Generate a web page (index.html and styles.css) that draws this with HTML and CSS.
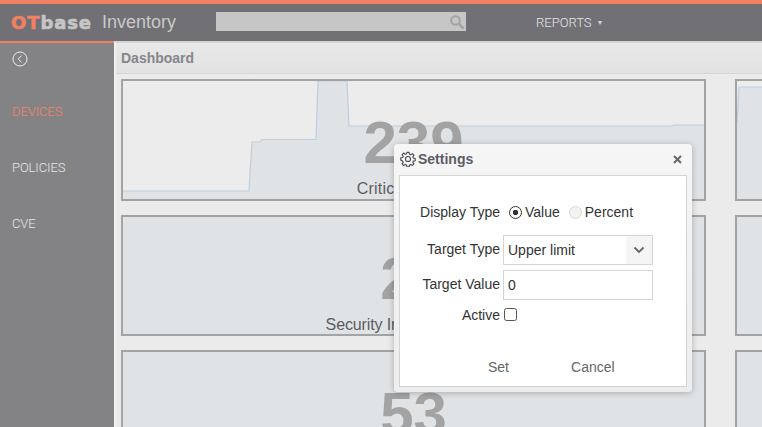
FILE: index.html
```html
<!DOCTYPE html>
<html lang="en">
<head>
<meta charset="utf-8">
<title>OTbase Inventory</title>
<link rel="stylesheet" href="styles.css">
</head>
<body>
<div class="app">
  <header class="topbar">
    <div class="logo"><span class="logo-ot">OT</span><span class="logo-base">base</span></div>
    <div class="product">Inventory</div>
    <div class="search">
      <svg class="search-icon" width="16" height="16" viewBox="0 0 16 16"><circle cx="6.5" cy="6.5" r="4.3" fill="none" stroke="#a3a3a3" stroke-width="2"/><path d="M10 10l4.5 4.5" stroke="#a3a3a3" stroke-width="2.6" fill="none"/></svg>
    </div>
    <div class="reports">REPORTS<span class="caret">▼</span></div>
  </header>
  <div class="body">
    <nav class="sidebar">
      <svg class="back" width="16" height="16" viewBox="0 0 16 16"><circle cx="8" cy="8" r="7" fill="none" stroke="#eee" stroke-width="1"/><path d="M9.6 4.6L6.2 8l3.4 3.4" fill="none" stroke="#eee" stroke-width="1"/></svg>
      <a class="nav nav-active">DEVICES</a>
      <a class="nav">POLICIES</a>
      <a class="nav">CVE</a>
    </nav>
    <main class="main">
      <div class="titlebar">Dashboard</div>
      <div class="grid">
        <section class="card card-chart">
          <svg class="chart" width="581" height="118" viewBox="0 0 581 118"><path class="area" d="M0 110H126L129 61H137L139 58.500H193L195 0H224L226 45H549L551 44H581V118H0Z"/><path class="line" d="M0 110H126L129 61H137L139 58.500H193L195 0H224L226 45H549L551 44H581"/></svg>
          <div class="value">239</div>
          <div class="label label-wide">Critical Devices</div>
        </section>
        <section class="card card-side card-chart">
          <svg class="chart" width="25" height="118" viewBox="0 0 25 118"><path class="area" d="M0 42L2 6H25V118H0Z"/><path class="line" d="M0 42L2 6H25"/></svg>
        </section>
        <section class="card">
          <div class="value">23</div>
          <div class="label label-tight">Security Incident Reports</div>
        </section>
        <section class="card card-side"></section>
        <section class="card">
          <div class="value">53</div>
        </section>
        <section class="card card-side"></section>
      </div>
    </main>
  </div>
</div>
<div class="dialog">
  <div class="dialog-head">
    <svg class="gear" width="16" height="16" viewBox="0 0 24 24"><path d="M10.300 2h3.400l.5 2.900 1.900.8 2.400-1.700 2.400 2.400-1.700 2.400.8 1.900 2.900.5v3.400l-2.900.5-.8 1.900 1.700 2.400-2.400 2.400-2.400-1.700-1.900.8-.5 2.900h-3.400l-.5-2.900-1.900-.8-2.400 1.700-2.400-2.400 1.700-2.400-.8-1.900L1.100 13.700v-3.400l2.900-.5.800-1.900-1.700-2.400 2.400-2.400 2.400 1.700 1.900-.8z" fill="none" stroke="#4d4d58" stroke-width="1.700" stroke-linejoin="round"/><circle cx="12" cy="12" r="3.800" fill="none" stroke="#4d4d58" stroke-width="1.700"/></svg>
    <span class="dialog-title">Settings</span>
    <svg class="close" width="9" height="9" viewBox="0 0 9 9"><path d="M1 1l7 7M8 1L1 8" fill="none" stroke="#666" stroke-width="2"/></svg>
  </div>
  <div class="dialog-body">
    <div class="row row-display">
      <span class="row-label">Display Type</span>
      <span class="radio radio-on"></span><span class="radio-text">Value</span>
      <span class="radio radio-off"></span><span class="radio-text">Percent</span>
    </div>
    <div class="row row-select">
      <span class="row-label row-label-raised">Target Type</span>
      <div class="select"><span class="select-text">Upper limit</span><span class="select-btn"><svg width="12" height="8" viewBox="0 0 12 8"><path d="M1.500 1.500L6 6l4.500-4.500" fill="none" stroke="#666" stroke-width="1.800"/></svg></span></div>
    </div>
    <div class="row row-input">
      <span class="row-label row-label-raised">Target Value</span>
      <div class="input">0</div>
    </div>
    <div class="row row-check">
      <span class="row-label">Active</span>
      <span class="check"></span>
    </div>
    <div class="actions">
      <span class="action action-set">Set</span>
      <span class="action">Cancel</span>
    </div>
  </div>
</div>
</body>
</html>
```
FILE: styles.css
```css
* { box-sizing: border-box; }
html, body { margin: 0; height: 100%; overflow: hidden; }
body { font-family: "Liberation Sans", Arial, sans-serif; background: #ebebeb; }
.app { width: 762px; height: 427px; display: flex; flex-direction: column; overflow: hidden; }

.topbar { height: 41px; flex: none; background: #717075; border-top: 4px solid #f08263; display: flex; align-items: center; padding-left: 11px; }
.logo { font-family: "DejaVu Sans", sans-serif; font-weight: 700; font-size: 18px; letter-spacing: .9px; width: 91px; -webkit-text-stroke: .6px currentColor; }
.logo-ot { color: #f08263; }
.logo-base { color: #c6c6c6; }
.product { font-size: 18px; color: #c9c9c9; width: 114px; }
.search { width: 250px; height: 19px; background: #c6c6c6; margin-top: -2px; display: flex; align-items: center; justify-content: flex-end; padding-right: 1px; }
.search-icon { display: block; }
.reports { margin-left: 70px; font-family: Roboto, sans-serif; font-weight: 300; font-size: 13px; color: #e6e6e6; display: flex; align-items: center; }
.caret { font-size: 7px; margin-left: 5px; color: #d2d2d2; }

.body { flex: 1; display: flex; min-height: 0; }
.sidebar { width: 114px; flex: none; background: #838385; border-top: 2px solid #f08263; display: flex; flex-direction: column; padding-left: 12px; }
.back { display: block; margin-top: 8px; margin-bottom: 37px; }
.nav { display: block; height: 56px; font-family: Roboto, sans-serif; font-weight: 300; font-size: 13px; letter-spacing: -.1px; line-height: 16px; color: #e6e6e6; }
.nav-active { color: #f5836a; }

.main { flex: 1; min-width: 0; border-left: 2px solid #f1f1f1; border-top: 2px solid #d4d4d4; display: flex; flex-direction: column; }
.titlebar { height: 31px; flex: none; background: linear-gradient(#e8e8e8, #e2e2e2); border-bottom: 1px solid #d6d6d6; padding: 7px 0 0 5px; font-size: 14px; font-weight: 700; line-height: 16px; color: #85858d; }
.grid { display: grid; grid-template-columns: 585px 60px; grid-template-rows: 122px 121px 122px; column-gap: 29px; row-gap: 14px; padding: 5px 0 0 5px; }

.card { position: relative; border: 2px solid #a3a3a3; background: #e0e3e6; overflow: hidden; text-align: center; }
.card-chart { background: #ececec; }
.chart { position: absolute; left: 0; top: 0; display: block; }
.area { fill: #e0e3e6; }
.line { fill: none; stroke: #bccfe0; stroke-width: 1.200; }
.value { position: relative; margin-top: 32px; font-size: 60px; font-weight: 700; line-height: 60px; color: #a3a3a3; }
.label { position: relative; margin-top: 7px; font-size: 16px; line-height: 18px; color: #5d5d5d; }
.label-tight { letter-spacing: -.12px; }
.label-wide { letter-spacing: .2px; }

.dialog { position: absolute; left: 394px; top: 144px; width: 298px; height: 248px; background: linear-gradient(#f6f6f6, #ededed); border-radius: 4px; box-shadow: 0 1px 6px rgba(0,0,0,.25); padding: 0 5px; display: flex; flex-direction: column; }
.dialog-head { height: 31px; flex: none; display: flex; align-items: center; padding: 0 0 1px 1px; }
.gear { display: block; margin-right: 2px; }
.dialog-title { font-size: 14px; font-weight: 700; color: #5c5c66; line-height: 16px; }
.close { display: block; margin-left: auto; margin-right: 5px; }
.dialog-body { flex: none; height: 212px; background: #fff; border: 1px solid #d4d4d4; font-size: 14px; color: #333; padding-top: 28px; }
.row { display: flex; align-items: center; }
.row-label { width: 100px; flex: none; text-align: right; margin-right: 3px; }
.row-label-raised { margin-bottom: 2px; }
.row-display { height: 16px; }
.radio { width: 13px; height: 13px; border-radius: 50%; flex: none; }
.radio-on { margin-left: 6px; border: 1.500px solid #333; background: radial-gradient(circle, #333 0 2.500px, #fff 3px); }
.radio-off { margin-left: 9px; border: 1px solid #d8d8d8; background: #f3f3f3; }
.radio-text { margin-left: 3px; }
.row-select { margin-top: 15px; }
.select { width: 150px; height: 30px; border: 1px solid #d4d4d4; display: flex; align-items: center; }
.select-text { flex: 1; padding-left: 4px; }
.select-btn { width: 26px; height: 28px; background: #f5f5f5; display: flex; align-items: center; justify-content: center; }
.select-btn svg { display: block; }
.row-input { margin-top: 5px; }
.input { width: 150px; height: 30px; border: 1px solid #d4d4d4; line-height: 28px; padding-left: 4px; }
.row-check { height: 30px; }
.check { width: 13px; height: 13px; margin-left: 1px; margin-top: -2px; border: 1px solid #555; border-radius: 2.500px; background: #fff; }
.actions { display: flex; margin-top: 29px; }
.action { color: #666; line-height: 16px; }
.action-set { margin-left: 88px; margin-right: 62px; }
```
